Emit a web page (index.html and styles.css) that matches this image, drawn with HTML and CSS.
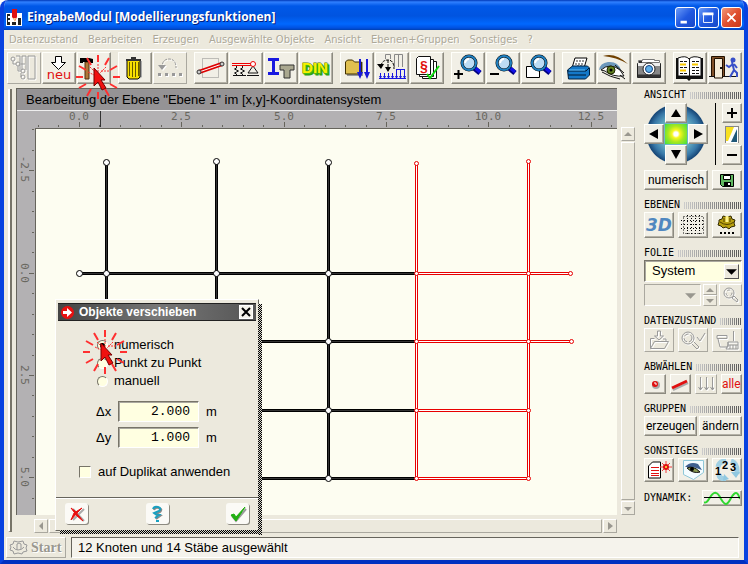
FILE: index.html
```html
<!DOCTYPE html>
<html lang="de">
<head>
<meta charset="utf-8">
<title>EingabeModul</title>
<link rel="stylesheet" href="styles.css">
</head>
<body>
<svg class="defs" aria-hidden="true">
  <defs>
    <symbol id="burst" viewBox="0 0 48 48">
      <g stroke="#ff3030" stroke-width="2" fill="none">
        <path d="M24 2v7M24 39v7M2 24h7M39 24h7M13 5l4 7M35 5l-4 7M5 13l7 4M43 13l-7 4M5 35l7-4M43 35l-7-4M13 43l4-7M35 43l-4-7"/>
        <path stroke-width="1" stroke-dasharray="2 1" d="M24 11v8M14 19l6 3M32 14l-6 6M35 18h-8M16 14l4 4"/>
      </g>
      <path d="M20 15l11 12h-4l5 8-4 2-4-8-4 4z" fill="#f01010" stroke="#700" stroke-width="1"/>
    </symbol>
    <symbol id="lens" viewBox="0 0 32 30">
      <path d="M22 15l6 5" stroke="#000080" stroke-width="5"/>
      <path d="M22 14l6 5" stroke="#1010e8" stroke-width="3"/>
      <circle cx="17" cy="10" r="7" fill="#bcdcf4" stroke="#000" stroke-width="3"/>
      <circle cx="17" cy="10" r="7" fill="none" stroke="#2080c0" stroke-width="2"/>
      <path d="M13 10q1-4 4-4" stroke="#fff" stroke-width="2" fill="none"/>
    </symbol>
  </defs>
</svg>
<div class="window">
  <header class="titlebar">
    <svg class="app-icon" viewBox="0 0 16 17"><path d="M0 4h16v13H0z" fill="#fff"/><path d="M1 5h3v11H1zM12 9h3v7h-3zM6 13h4v3H6z" fill="#222"/><path d="M2 7h2v2H2zM2 11h2v2H2z" fill="#fff"/><path d="M6 0h5v8l-2 4-3-4z" fill="#e01010"/><path d="M7 9h3l-1 4z" fill="#fc8"/></svg>
    <h1>EingabeModul [Modellierungsfunktionen]</h1>
    <div class="caption-buttons">
      <button class="cap" aria-label="Minimieren"><svg viewBox="0 0 21 21"><path d="M5 14h7v3H5z" fill="#fff"/></svg></button>
      <button class="cap" aria-label="Maximieren"><svg viewBox="0 0 21 21"><path d="M5 6h10v10H5z" fill="none" stroke="#fff"/><path d="M4 5h12v3H4z" fill="#fff"/></svg></button>
      <button class="cap cap-close" aria-label="Schließen"><svg viewBox="0 0 21 21"><path d="M6 6l9 9M15 6l-9 9" stroke="#fff" stroke-width="2"/></svg></button>
    </div>
  </header>
  <nav class="menubar">
    <a href="#">Datenzustand</a><a href="#">Bearbeiten</a><a href="#">Erzeugen</a><a href="#">Ausgewählte Objekte</a><a href="#">Ansicht</a><a href="#">Ebenen+Gruppen</a><a href="#">Sonstiges</a><a href="#">?</a>
  </nav>
  <div class="toolbar">
    <div class="group">
      <button class="tool off" aria-label="Struktur"><svg viewBox="0 0 32 30"><path d="M8 3h4v8M14 17V3h4v14M20 3h7v23h-7zM12 11v6M17 11h-4M5 8v3h3M10 13v5h3M13 20v4" fill="none" stroke="#999"/><g fill="none" stroke="#999"><circle cx="5" cy="6" r="2"/><circle cx="10" cy="11" r="2"/><circle cx="15" cy="18" r="2"/><circle cx="15" cy="24" r="2"/></g></svg></button>
      <button class="tool" aria-label="Neu"><svg viewBox="0 0 32 30"><path d="M12.500 3.500h6v6h4l-7 7-7-7h4z" fill="#fff" stroke="#000"/><text class="neu" x="16" y="26">neu</text></svg></button>
      <button class="tool hammer" aria-label="Bearbeiten"><svg viewBox="0 0 32 30"><path d="M7 9h4v17H7z" fill="#b07838" stroke="#503010"/><path d="M2 5h9l4 1v4h-2l-2-1H5v1H2z" fill="#000"/></svg><svg class="burst"><use href="#burst"/></svg></button>
    </div>
    <div class="group">
      <button class="tool" aria-label="Löschen"><svg viewBox="0 0 32 30"><path d="M19 8h4v16l-3 2h-9z" fill="#aaa"/><path d="M8 7h13v17l-2 2h-9l-2-2z" fill="#f8e000" stroke="#000"/><path d="M10.500 9v14M13.500 9v15M16.500 9v15M19.500 9v14" stroke="#665800"/><path d="M7 6h15v2H7zM12 4h5v2h-5z" fill="#333"/></svg></button>
      <button class="tool off" aria-label="Rückgängig"><svg viewBox="0 0 32 30"><path d="M8 15q0-9 7-9t7 9" fill="none" stroke="#999" stroke-width="1" stroke-dasharray="3 1"/><path d="M4 12h8l-4 5zM4 20h3v3H4zM11 20h3v3h-3zM18 20h3v3h-3zM25 20h3v3h-3z" fill="#999"/></svg></button>
    </div>
    <div class="group">
      <button class="tool" aria-label="Stab"><svg viewBox="0 0 32 30"><path d="M7.500 5.500h16v19h-16z" fill="none" stroke="#888" stroke-dasharray="1 1"/><path d="M4 19l23-8" stroke="#d00" stroke-width="4"/><path d="M4 19l23-8" stroke="#fff" stroke-width="1"/><circle cx="4" cy="19" r="2" fill="#ccc" stroke="#333"/><circle cx="27" cy="11" r="2" fill="#ccc" stroke="#333"/></svg></button>
      <button class="tool" aria-label="Lager"><svg viewBox="0 0 32 30"><path d="M2 10.500h20M2 12.500h20" stroke="#e00"/><path d="M6.500 13v2l-2 1 4 2-4 2 2 1v2M12.500 13v2l-2 1 4 2-4 2 2 1v2M3 22.500h13M23 13l-5 7h10zM17 22.500h12" fill="none" stroke="#111"/><circle cx="23" cy="11" r="2.500" fill="#fff" stroke="#e00"/></svg></button>
      <button class="tool" aria-label="Querschnitt"><svg viewBox="0 0 32 30"><path d="M3 6.500h11M3 20.500h11M8.500 7v13" stroke="#1818e0" stroke-width="3"/><path d="M15 12h14v5h-4v8h-6v-8h-4z" fill="#aaa890" stroke="#333"/></svg></button>
      <button class="tool" aria-label="DIN"><svg viewBox="0 0 32 30"><text class="din" x="15" y="20">DIN</text></svg></button>
    </div>
    <div class="group">
      <button class="tool" aria-label="Laden"><svg viewBox="0 0 32 30"><path d="M6 9h16v14H6z" fill="#999"/><path d="M4.500 21V9l2-2h5l2 2h7v12z" fill="#e0c050" stroke="#403000"/><path d="M19 6v16M26 6v16" stroke="#1818d8" stroke-width="2"/><path d="M16 19h6l-3 7zM23 19h6l-3 7z" fill="#1818d8"/></svg></button>
      <button class="tool" aria-label="Lasten"><svg viewBox="0 0 32 30"><path d="M9.500 6V1.500h5V6M18.500 14V1.500h8V14M22.500 2v12" fill="none" stroke="#888"/><path d="M5 13q1-6 7-6t6 9M12 7v10" fill="none" stroke="#000" stroke-dasharray="3 1"/><path d="M1 11h7l-3 5zM9 14h6l-3 5z" fill="#000"/><path d="M3 25.500h27M4.500 20v5M8.500 20v5M12.500 20v5M16.500 20v5M20.500 16v9M24.500 16v9M28.500 16v9M20 16.500h9" stroke="#1818e0"/><path d="M3 23h3l-1.500 3zM7 23h3l-1.500 3zM11 23h3l-1.500 3zM15 23h3l-1.500 3zM19 23h3l-1.500 3zM23 23h3l-1.500 3zM27 23h3l-1.500 3z" fill="#1818e0"/></svg></button>
      <button class="tool" aria-label="Prüfen"><svg viewBox="0 0 32 30"><g fill="#fff" stroke="#111"><path d="M11.500 8.500h14v17h-14z"/><path d="M8.500 6.500h14v17h-14z"/><path d="M5.500 5.500l2-2h12v18h-14z"/></g><text class="para" x="13" y="18">§</text><path d="M16 21l3 4 9-12" fill="none" stroke="#10d810" stroke-width="2"/></svg></button>
    </div>
    <div class="group">
      <button class="tool" aria-label="Vergrößern"><svg viewBox="0 0 32 30"><use href="#lens"/><path d="M2 21h9M6.500 17v9" stroke="#000" stroke-width="2"/></svg></button>
      <button class="tool" aria-label="Verkleinern"><svg viewBox="0 0 32 30"><use href="#lens"/><path d="M3 21h9" stroke="#000" stroke-width="2"/></svg></button>
      <button class="tool" aria-label="Ausschnitt"><svg viewBox="0 0 32 30"><path d="M4.500 13.500h13v11h-13z" fill="#fff" stroke="#000"/><use href="#lens"/></svg></button>
    </div>
    <div class="group">
      <button class="tool" aria-label="Drucken"><svg viewBox="0 0 32 30"><path d="M9 15l3-10h12l-3 10z" fill="#fff" stroke="#000"/><path d="M13 8h8M12 11h8M14 13h5" stroke="#333" stroke-dasharray="2 1"/><path d="M4.500 17l5-4h15l2 2v7l-4 4h-17z" fill="#1478c8" stroke="#002040"/><path d="M5 18h18l3-3M5 22h18" fill="none" stroke="#001830"/><path d="M6 17h16" stroke="#60c0ff"/></svg></button>
      <button class="tool" aria-label="Ansehen"><svg viewBox="0 0 32 30"><path d="M5 3Q17-1 30 11 18 4 5 3z" fill="#704000"/><path d="M1 17q1-7 9-8 10-1 13 8l-12-4z" fill="#6c98bc"/><path d="M3 17q9-8 19 0l4 6q-12 1-19-5z" fill="#fff" stroke="#111"/><circle cx="13" cy="17" r="4" fill="#608020" stroke="#202800"/><circle cx="13" cy="17" r="1.500"/><path d="M4 19q8 5 18 7M17 12l9 8M22 22l5 4" fill="none" stroke="#111"/></svg></button>
      <button class="tool" aria-label="Foto"><svg viewBox="0 0 32 30"><path d="M5.500 9.500v-2h4v-1h12v1h5v2z" fill="#fff" stroke="#777"/><path d="M4.500 10.500h23v14h-23z" fill="#888" stroke="#222"/><path d="M5 10h22v3H5z" fill="#eee"/><path d="M5 23h22" stroke="#333" stroke-width="3"/><circle cx="16" cy="16" r="6" fill="#fff" stroke="#222"/><circle cx="16" cy="16" r="3.500" fill="#60b0e8" stroke="#104080"/><path d="M6 8h3v2H6z" fill="#333"/></svg></button>
    </div>
    <div class="group">
      <button class="tool" aria-label="Handbuch"><svg viewBox="0 0 32 30"><path d="M2 5h27v21H17l-2 2-2-2H2z" fill="#111"/><path d="M4 5q8-3 11 1 4-4 12-1v18H4z" fill="#fff" stroke="#111"/><path d="M15.500 6v19" stroke="#111"/><path d="M6 8.500h7M6 14.500h7M6 20.500h7M18 8.500h7M18 14.500h7M18 17.500h7M18 20.500h7" stroke="#111" stroke-dasharray="3 1"/><path d="M6 11.500h6M18 11.500h6M6 17.500h6" stroke="#f8c800" stroke-width="2"/></svg></button>
      <button class="tool" aria-label="Beenden"><svg viewBox="0 0 32 30"><path d="M2.500 24V3.500h13V24" fill="#805028" stroke="#201000"/><path d="M5.500 5.500h8V25h-8z" fill="#f4ecd8" stroke="#201000"/><path d="M11 14h2v2h-2zM0 23h6v1H0zM14 23h15v1H14z" fill="#111"/><circle cx="24" cy="7" r="2.500" fill="#3850c8"/><path d="M23 9l2 8-4 7M25 17l3 3v4M24 11l-4 3-3-2M25 11l3 4" fill="none" stroke="#3850c8" stroke-width="2"/></svg></button>
    </div>
  </div>

  <main class="workspace">
    <div class="rail"></div>
    <section class="editor">
      <div class="view">
        <h2>Bearbeitung der Ebene "Ebene 1" im [x,y]-Koordinatensystem</h2>
        <svg class="ruler-x"><g transform="translate(-17 -111)"><path class="tick" d="M79.500 122v5M181.500 122v5M284.500 122v5M386.500 122v5M488.500 122v5M591.500 122v5M38.500 125v2M58.500 125v2M99.500 125v2M120.500 125v2M140.500 125v2M161.500 125v2M202.500 125v2M222.500 125v2M243.500 125v2M263.500 125v2M304.500 125v2M325.500 125v2M345.500 125v2M366.500 125v2M407.500 125v2M427.500 125v2M448.500 125v2M468.500 125v2M509.500 125v2M529.500 125v2M550.500 125v2M571.500 125v2M611.500 125v2"/><path d="M100.500 111v16" stroke="#333"/><g class="scale"><text x="79" y="120">0.0</text><text x="181" y="120">2.5</text><text x="284" y="120">5.0</text><text x="386" y="120">7.5</text><text x="488" y="120">10.0</text><text x="591" y="120">12.5</text></g></g></svg>
        <svg class="ruler-y"><g transform="translate(-17 -128)"><path class="tick" d="M29 170.500h5M29 273.500h5M29 375.500h5M29 477.500h5M32 129.500h2M32 150.500h2M32 191.500h2M32 211.500h2M32 232.500h2M32 252.500h2M32 293.500h2M32 314.500h2M32 334.500h2M32 355.500h2M32 395.500h2M32 416.500h2M32 436.500h2M32 457.500h2M32 498.500h2"/><g class="scale"><text transform="translate(21 169) rotate(90)">-2.5</text><text transform="translate(21 273) rotate(90)">0.0</text><text transform="translate(21 375) rotate(90)">2.5</text><text transform="translate(21 477) rotate(90)">5.0</text></g></g></svg>
        <svg class="model"><g transform="translate(-36 -129)">
          <path class="bar" d="M106.500 162v317M216.500 161v318M328.500 162v317M79 273.500h338M79 341.500h338M79 410.500h338M79 478.500h338"/>
          <path class="bar-core" d="M106.500 162v317M216.500 161v318M328.500 162v317M79 273.500h338M79 341.500h338M79 410.500h338M79 478.500h338"/>
          <path class="sel" d="M416.500 163v316M528.500 161v318M416 273.500h154M416 341.500h155M416 410.500h112M416 478.500h112"/>
          <path class="sel-core" d="M416.500 163v316M528.500 161v318M416 273.500h154M416 341.500h155M416 410.500h112M416 478.500h112"/>
          <g class="node"><circle cx="106.500" cy="162.500" r="3"/><circle cx="216.500" cy="161.500" r="3"/><circle cx="328.500" cy="162.500" r="3"/><circle cx="79.500" cy="273.500" r="3"/><circle cx="106.500" cy="273.500" r="3"/><circle cx="216.500" cy="273.500" r="3"/><circle cx="328.500" cy="273.500" r="3"/><circle cx="328.500" cy="341.500" r="3"/><circle cx="328.500" cy="410.500" r="3"/><circle cx="328.500" cy="478.500" r="3"/></g>
          <g class="node-sel"><circle cx="416.500" cy="163.500" r="2"/><circle cx="528.500" cy="161.500" r="2"/><circle cx="416.500" cy="273.500" r="2"/><circle cx="528.500" cy="273.500" r="2"/><circle cx="570.500" cy="273.500" r="2"/><circle cx="416.500" cy="341.500" r="2"/><circle cx="528.500" cy="341.500" r="2"/><circle cx="571.500" cy="341.500" r="2"/><circle cx="416.500" cy="410.500" r="2"/><circle cx="528.500" cy="410.500" r="2"/><circle cx="416.500" cy="478.500" r="2"/><circle cx="528.500" cy="478.500" r="2"/></g>
        </g></svg>
      </div>
      <div class="scroll-y"><button class="arrow" aria-label="Nach oben"><svg viewBox="0 0 12 12"><path d="M2 8l4-4 4 4z"/></svg></button><div class="track"></div><button class="arrow" aria-label="Nach unten"><svg viewBox="0 0 12 12"><path d="M2 5h8L6 9z"/></svg></button></div>
      <div class="scroll-x"><button class="arrow" aria-label="Nach links"><svg viewBox="0 0 12 12"><path d="M8 2v8L4 6z"/></svg></button><div class="track"></div><button class="arrow" aria-label="Nach rechts"><svg viewBox="0 0 12 12"><path d="M4 2v8l5-4z"/></svg></button></div>
    </section>

    <aside class="panel">
      <section>
        <h3>ANSICHT</h3>
        <div class="view-controls">
          <div class="compass">
            <button class="btn up" aria-label="Oben"><svg viewBox="0 0 18 18"><path d="M4 13l5-8 5 8z"/></svg></button>
            <button class="btn left" aria-label="Links"><svg viewBox="0 0 18 18"><path d="M13 4v10L4 9z"/></svg></button>
            <button class="hub" aria-label="Mitte"></button>
            <button class="btn right" aria-label="Rechts"><svg viewBox="0 0 18 18"><path d="M5 4v10l9-5z"/></svg></button>
            <button class="btn down" aria-label="Unten"><svg viewBox="0 0 18 18"><path d="M4 4h10l-5 9z"/></svg></button>
          </div>
          <div class="rule"></div>
          <div class="zoom-col">
            <button class="btn" aria-label="Größer"><svg viewBox="0 0 18 18"><path d="M4 9h10M9 4v10" stroke="#000" stroke-width="2"/></svg></button>
            <svg class="contrast" viewBox="0 0 14 17"><path d="M0 0h14v17H0z" fill="#888"/><path d="M1 1h12v16H1z" fill="#fff"/><path d="M1 1h8L3 15H1z" fill="#f8e020"/><path d="M12 3v13H6z" fill="#205878"/></svg>
            <button class="btn" aria-label="Kleiner"><svg viewBox="0 0 18 18"><path d="M4 9h10" stroke="#000" stroke-width="2"/></svg></button>
          </div>
        </div>
        <div class="row h20 gap-top"><button class="btn grow">numerisch</button><button class="btn w30" aria-label="Speichern"><svg width="16" height="16" viewBox="0 0 16 16"><path d="M1.500 2.500h13v12h-11l-2-2z" fill="#60b860" stroke="#000"/><path d="M4.500 3.500h7v4h-7z" fill="#fff" stroke="#000"/><path d="M5 10h7v4H5z" fill="#000"/><path d="M9 11h2v2H9z" fill="#fff"/></svg></button></div>
      </section>
      <section>
        <h3>EBENEN</h3>
        <div class="row h26"><button class="btn grow threed">3D</button><button class="btn grow" aria-label="Raster"><svg width="26" height="22" viewBox="0 0 26 22"><path d="M3.500 2.500h20v17h-20zM7.500 1v20M11.500 1v20M15.500 1v20M19.500 1v20M1 6.500h24M1 10.500h24M1 14.500h24" fill="none" stroke="#000" stroke-dasharray="1 2"/></svg></button><button class="btn grow" aria-label="Ebene einstellen"><svg width="22" height="22" viewBox="0 0 22 22"><path d="M3 6l3-1 1-3 4 1 4-1 1 3 3 1-1 3 1 3-4 1-2 2-3-2-3 1-2-2-3-1 1-3z" fill="#b8a010" stroke="#302800"/><path d="M11 2v6" stroke="#fff48c" stroke-width="3"/><path d="M4 8q7 5 14 0M8 4v4M14 4v4" fill="none" stroke="#504000"/><path d="M4 18h2v2H4zM8 18h2v2H8zM12 18h2v2h-2zM16 18h2v2h-2z"/></svg></button></div>
      </section>
      <section>
        <h3>FOLIE</h3>
        <div class="combo"><select aria-label="Folie"><option>System</option></select><span class="drop"><svg viewBox="0 0 12 12"><path d="M1 4h10L6 9z"/></svg></span></div>
        <div class="row h22 tight">
          <div class="combo combo-off"><select aria-label="Element" disabled><option></option></select><span class="drop"><svg viewBox="0 0 12 12"><path d="M1 4h10L6 9z"/></svg></span></div>
          <div class="spin"><button class="arrow" aria-label="Weiter"><svg viewBox="0 0 10 8"><path d="M1 6l4-4 4 4z"/></svg></button><button class="arrow" aria-label="Zurück"><svg viewBox="0 0 10 8"><path d="M1 2h8L5 6z"/></svg></button></div>
          <button class="btn off w23" aria-label="Suchen"><svg width="18" height="18" viewBox="0 0 18 18" fill="none" stroke="#999"><circle cx="7" cy="7" r="5"/><circle cx="7" cy="7" r="3" stroke-dasharray="3 3"/><path d="M10 12l5 4 1-2-4-4z"/></svg></button>
        </div>
      </section>
      <section>
        <h3>DATENZUSTAND</h3>
        <div class="row h24"><button class="btn grow off" aria-label="Öffnen"><svg width="22" height="20" viewBox="0 0 22 20" fill="none" stroke="#999"><path d="M9.500 1h3v5h3l-4.500 4-4.500-4h3zM2.500 18.500v-10h4M15 9h3v3M2.500 18.500l4-7h14l-4 7z"/></svg></button><button class="btn grow off" aria-label="Kontrollieren"><svg width="26" height="20" viewBox="0 0 26 20" fill="none" stroke="#999"><circle cx="8" cy="8" r="6"/><circle cx="8" cy="8" r="4" stroke-dasharray="5 2"/><path d="M12 14l5 5 2-2-5-5M17 7l3 4 5-8" /></svg></button><button class="btn grow off" aria-label="Aufräumen"><svg width="24" height="20" viewBox="0 0 24 20" fill="none" stroke="#999"><path d="M2 5.500h10v3H2zM3 9l2 8h8v-5M18.500 1v10M13 12h10v3H13zM13 15l-2 4h12v-4M15 15v4M18 15v4M21 15v4"/></svg></button></div>
      </section>
      <section>
        <h3>ABWÄHLEN</h3>
        <div class="row h20"><button class="btn grow" aria-label="Knoten"><svg width="16" height="16" viewBox="0 0 16 16"><circle cx="9" cy="9" r="4" fill="#aaa"/><circle cx="8" cy="8" r="3" fill="#e01010"/><path d="M7 7h2v2" stroke="#fff" fill="none"/></svg></button><button class="btn grow" aria-label="Stäbe"><svg width="18" height="16" viewBox="0 0 18 16"><path d="M2 14l15-7" stroke="#aaa" stroke-width="2"/><path d="M1 12l15-7" stroke="#e01010" stroke-width="3"/></svg></button><button class="btn grow off" aria-label="Lasten"><svg width="16" height="16" viewBox="0 0 16 16" fill="none" stroke="#999"><path d="M2.500 1v13M8.500 1v13M14.500 1v13M.500 11l2 3 2-3M6.500 11l2 3 2-3M12.500 11l2 3 2-3"/></svg></button><button class="btn grow alle">alle</button></div>
      </section>
      <section>
        <h3>GRUPPEN</h3>
        <div class="row h20 close"><button class="btn wide">erzeugen</button><button class="btn grow">ändern</button></div>
      </section>
      <section>
        <h3>SONSTIGES</h3>
        <div class="row h24"><button class="btn grow" aria-label="Protokoll"><svg width="26" height="20" viewBox="0 0 26 20"><path d="M2.500 6l4-4h8v16h-12z" fill="#fff" stroke="#000"/><path d="M5 7.500h8M5 10.500h8M5 13.500h8M5 15.500h8" stroke="#e01010"/><path d="M20 1v12M14 7h12M16 3l8 8M24 3l-8 8" stroke="#f04040"/><circle cx="20" cy="7" r="3" fill="#e01010"/><circle cx="20" cy="7" r="1" fill="#fe4"/></svg></button><button class="btn grow" aria-label="Sichtbarkeit"><svg width="26" height="22" viewBox="0 0 26 22"><path d="M3.500 1.500h20v12l-10 7-10-5z" fill="#f4fcff" stroke="#90c8d8"/><path d="M5 8q5-6 13-3l4 6-9-3z" fill="#406090"/><path d="M7 9q6-3 13 4-7 2-13-4z" fill="#8a9a50" stroke="#111"/><circle cx="12" cy="10" r="2"/></svg></button><button class="btn grow" aria-label="Nummerierung"><svg width="26" height="22" viewBox="0 0 26 22"><path d="M5 15q0 5 7 5M4 8q1-6 8-6M17 2q7 2 6 13" fill="none" stroke="#a0d0e4" stroke-width="5"/><path d="M10 15l5 5-6 2zM17 13h9l-4 6z" fill="#90c8e0"/><g class="digits"><text x="1" y="16">1</text><text x="8" y="10">2</text><text x="16" y="12">3</text></g></svg></button></div>
      </section>
      <section class="dynamic"><span id="dyn">DYNAMIK:</span><button class="btn" aria-labelledby="dyn"><svg width="36" height="14" viewBox="0 0 36 14"><path d="M0 11q2 2 5-3 4-7 7-6 2 0 5 6 3 5 5 5 2 0 5-6 3-5 5-5 2 0 4 6" fill="none" stroke="#30d830" stroke-width="2"/><path d="M0 6.500h36" stroke="#000"/></svg></button></section>
    </aside>

    <form class="dialog" onsubmit="return false">
      <header><svg width="13" height="13" viewBox="0 0 13 13"><circle cx="6.500" cy="6.500" r="6.500" fill="#e81010"/><path d="M2 5h4V2l5 4.500L6 11V8H2z" fill="#fff"/></svg><h2>Objekte verschieben</h2><button aria-label="Schließen"><svg width="10" height="10" viewBox="0 0 10 10"><path d="M1 1l8 8M9 1l-8 8" stroke="#000" stroke-width="2"/></svg></button></header>
      <div class="fields">
        <label class="choice"><input type="radio" name="modus" checked>numerisch</label>
        <label class="choice"><input type="radio" name="modus">Punkt zu Punkt</label>
        <label class="choice"><input type="radio" name="modus">manuell</label>
        <div class="value first"><label for="dx">Δx</label><input id="dx" type="text" value="2.000"><span>m</span></div>
        <div class="value"><label for="dy">Δy</label><input id="dy" type="text" value="1.000"><span>m</span></div>
        <label class="check"><input type="checkbox">auf Duplikat anwenden</label>
      </div>
      <footer>
        <button aria-label="Abbrechen"><svg width="18" height="18" viewBox="0 0 18 18"><path d="M5 4l11 12M16 4L5 15" stroke="#aaa" stroke-width="2"/><path d="M3 3l4 3 8 10-6-5zM14 3l-5 5-6 7 3-7z" fill="#e81010" stroke="#e81010"/></svg></button>
        <button aria-label="Hilfe"><svg width="18" height="18" viewBox="0 0 18 18"><path d="M6 5q1-3 5-2 4 1 1 4l-4 2q1 2 4 2l-4 3" fill="none" stroke="#888" stroke-width="2"/><path d="M5 4q1-3 5-2 4 1 1 4l-5 2q2 2 5 2l-4 3" fill="none" stroke="#18a0c0" stroke-width="2"/><path d="M8 15h3v2H8z" fill="#18a0c0"/></svg></button>
        <button aria-label="Übernehmen"><svg width="18" height="18" viewBox="0 0 18 18"><path d="M3 11l4 5L17 4" fill="none" stroke="#999" stroke-width="2"/><path d="M2 10l3-1 2 3 9-10-9 14z" fill="#20b010" stroke="#20b010"/></svg></button>
      </footer>
      <svg class="burst"><use href="#burst"/></svg>
    </form>
  </main>

  <footer class="statusbar">
    <button class="start"><svg width="19" height="15" viewBox="0 0 19 15" fill="none" stroke="#999"><path d="M1 5l3-1 1-3 4 1 5-1 1 3 3 1-1 3 1 3-4 1-1 2-4-1-4 1-1-3-3-1 1-3z"/><path d="M8 10V4q2-2 4 0v5M4 7q2 3 5 3 4 0 6-3" /></svg>Start</button>
    <output class="status">12 Knoten und 14 Stäbe ausgewählt</output>
  </footer>
</div>
</body>
</html>
```
FILE: styles.css
```css
:root {
  --face: #ece9dd;
  --light: #fffffa;
  --dark: #8c8a80;
  --field: #ffffe1;
  --ui: "Liberation Sans", Arial, sans-serif;
  --mono: "DejaVu Sans Mono", monospace;
}
* { box-sizing: border-box; }
body { margin: 0; background: #fff; font: 13px/16px var(--ui); color: #000; }
h1, h2, h3 { margin: 0; font-size: inherit; }
button { font: inherit; color: inherit; padding: 0; margin: 0; }
svg { display: block; }
.defs { position: absolute; width: 0; height: 0; }

.window {
  min-height: 100vh;
  display: flex;
  flex-direction: column;
  background: var(--face);
  border: 4px solid #0842e0;
  border-top: 0;
  border-bottom-color: #0030c0;
  border-radius: 8px 8px 0 0;
  overflow: hidden;
}
.titlebar {
  height: 30px;
  margin: 0 -4px;
  padding: 4px 6px 0;
  display: flex;
  align-items: center;
  gap: 5px;
  background: linear-gradient(#0038b8 0, #3080ff 2px, #0058e8 6px, #0054e0 16px, #0068ff 24px, #0050e0 28px, #0040b0 30px);
}
.app-icon { width: 16px; height: 17px; }
.titlebar h1 { flex: 1; font: bold 12px/18px "Open Sans", sans-serif; color: #fff; text-shadow: 1px 1px 0 #002080; white-space: nowrap; }
.caption-buttons { display: flex; gap: 2px; }
.cap { width: 21px; height: 21px; border: 1px solid #fff; border-radius: 3px; background: linear-gradient(135deg, #6c9cf8, #2058e0 50%, #1848c8); }
.cap svg { width: 19px; height: 19px; }
.cap-close { background: linear-gradient(135deg, #f09878, #e05030 50%, #c83818); }

.menubar { height: 20px; display: flex; align-items: center; gap: 10px; padding-left: 5px; border-bottom: 1px solid #fff; }
.menubar a { font: 11px/16px "DejaVu Sans Condensed", "DejaVu Sans", sans-serif; color: #aca899; text-decoration: none; text-shadow: 1px 1px 0 #fff; white-space: nowrap; }

.toolbar { height: 38px; display: flex; gap: 7px; padding: 2px 3px; }
.group { display: flex; gap: 1px; }
.tool, .btn {
  background: #f1efe6;
  border: 1px solid;
  border-color: var(--light) var(--dark) var(--dark) var(--light);
  box-shadow: inset -1px -1px 0 #b4b1a6;
  display: flex;
  align-items: center;
  justify-content: center;
}
.tool { width: 34px; height: 32px; }
.tool svg { width: 32px; height: 30px; flex: none; }
.tool.off, .btn.off { background: var(--face); border-color: #fff #aaa89f #aaa89f #fff; box-shadow: none; }
.off svg { filter: drop-shadow(1px 1px 0 #fff); }
.neu { font: 13px "DejaVu Sans", sans-serif; fill: #e01010; text-anchor: middle; }
.din { font: bold 15px var(--ui); fill: #f8f000; stroke: #608000; stroke-width: 1px; paint-order: stroke; text-anchor: middle; text-shadow: 1px 1px 0 #40c010, 2px 2px 0 #30a010; }
.para { font: bold 14px var(--ui); fill: #e01010; text-anchor: middle; }
.hammer { position: relative; }
.burst, .tool .burst { position: absolute; width: 48px; height: 48px; pointer-events: none; z-index: 3; }
.tool .burst { left: -4px; top: 0; }

.workspace { flex: 1; display: flex; position: relative; min-height: 449px; }
.rail { width: 4px; margin: 1px 0 5px 4px; border-left: 2px solid #fff; border-right: 2px solid #777468; border-bottom: 1px solid #777468; }
.editor { flex: 1; min-width: 0; margin-left: 4px; display: grid; grid-template-columns: minmax(0, 1fr) 14px; grid-template-rows: minmax(0, 1fr) 14px; gap: 4px; padding-bottom: 4px; }
.view { display: grid; grid-template-columns: 18px minmax(0, 1fr); grid-template-rows: 22px 17px minmax(0, 1fr); border-top: 1px solid #66645c; border-left: 1px solid #66645c; }
.view h2 { grid-column: 1 / 3; background: #959395; border-bottom: 1px solid #eee; padding-left: 9px; font-weight: normal; line-height: 22px; white-space: nowrap; }
.view svg { width: 100%; height: 100%; overflow: hidden; }
.view .ruler-x { grid-column: 1 / 3; background: #b3b1b3; overflow: visible; }
.ruler-y { background: #b3b1b3; }
.model { background: #fdfdf1; border: 1px solid #66645c; border-width: 1px 0 0 1px; }
.tick { stroke: #66645c; fill: none; }
.scale { font: 11px var(--mono); fill: #69675f; text-anchor: middle; }
.bar { stroke: #000; stroke-width: 3; fill: none; }
.bar-core { stroke: #333; stroke-width: 1; fill: none; }
.sel { stroke: #e80000; stroke-width: 3; fill: none; }
.sel-core { stroke: #fff; stroke-width: 1; fill: none; }
.node { fill: #fff; stroke: #000; }
.node-sel { fill: #fff; stroke: #e80000; }
.scroll-y { display: flex; flex-direction: column; gap: 1px; padding-top: 39px; }
.scroll-x { display: flex; gap: 1px; padding-left: 18px; }
.track { flex: 1; border: 1px solid; border-color: #fff #aaa89f #aaa89f #fff; }
.arrow { width: 14px; height: 14px; background: var(--face); border: 1px solid; border-color: #fff #aaa89f #aaa89f #fff; fill: #99978f; display: flex; align-items: center; justify-content: center; }
.arrow svg { width: 12px; height: 12px; }

.panel { width: 98px; margin: 0 2px 0 9px; display: flex; flex-direction: column; gap: 8px; }
.panel h3, .dynamic span { font: 10px/14px var(--mono); }
.panel h3 { display: flex; align-items: center; gap: 4px; }
.panel h3::after { content: ""; flex: 1; height: 7px; background: repeating-linear-gradient(90deg, transparent 0 1px, var(--face) 1px 2px), linear-gradient(90deg, #ccc, #555); }
.btn { white-space: nowrap; fill: #000; font: 12px/16px Roboto, var(--ui); }
.row { display: flex; gap: 4px; }
.grow { flex: 1; min-width: 0; }
.w30 { width: 30px; }
.w23 { width: 23px; }
.wide { width: 53px; }
.h20 { height: 20px; }
.h22 { height: 22px; }
.h24 { height: 24px; }
.h26 { height: 26px; }
.close { gap: 2px; }
.tight { gap: 2px; margin-top: 2px; }
.gap-top { margin-top: 5px; }
.view-controls { display: flex; justify-content: space-between; padding-top: 1px; }
.compass { display: grid; grid-template-columns: 20px 22px 20px; grid-template-rows: 20px 20px 20px; gap: 1px; background: radial-gradient(circle, #70b8c8 14px, #3878a8 24px, #184878 29px, transparent 30px); }
.compass svg, .zoom-col .btn svg { width: 18px; height: 18px; }
.up { grid-area: 1 / 2; }
.left { grid-area: 2 / 1; }
.hub { grid-area: 2 / 2; border: 0; background: radial-gradient(circle, #fff 2px, #f8f820 4px, #a8e820 8px, #40e040 15px); }
.right { grid-area: 2 / 3; }
.down { grid-area: 3 / 2; }
.rule { width: 1px; background: #000; }
.zoom-col { width: 20px; display: flex; flex-direction: column; justify-content: space-between; align-items: center; }
.zoom-col .btn { width: 20px; height: 20px; }
.contrast { width: 14px; height: 17px; }
.threed { font: italic bold 17px/20px "DejaVu Sans", sans-serif; color: #5088c0; }
.combo { position: relative; height: 22px; border: 1px solid; border-color: #777468 #fff #fff #777468; box-shadow: inset 1px 1px 0 #aaa89f; background: var(--field); }
.combo select { width: 100%; height: 100%; appearance: none; border: 0; padding: 0 0 0 7px; background: transparent; font: inherit; color: inherit; }
.drop { position: absolute; right: 2px; top: 3px; width: 15px; height: 15px; background: var(--face); border: 1px solid; border-color: #fff #555 #555 #fff; pointer-events: none; }
.drop svg { width: 13px; height: 13px; }
.combo-off { flex: 1; background: var(--face); border-color: #aaa89f #fff #fff #aaa89f; box-shadow: none; }
.combo-off .drop { border-color: transparent; fill: #99978f; }
.spin { width: 14px; display: flex; flex-direction: column; }
.spin .arrow { height: 11px; }
.spin .arrow svg { width: 10px; height: 8px; }
.alle { color: #e01010; }
.digits { font: bold 11px var(--ui); }
.dynamic { display: flex; justify-content: space-between; align-items: center; }
.dynamic .btn { width: 40px; height: 16px; }

.dialog {
  position: absolute;
  left: 51px;
  top: 211px;
  width: 204px;
  background: var(--face);
  border: 1px solid;
  border-color: #fff #66645c #66645c #fff;
  padding: 3px 2px 0;
  z-index: 2;
}
.dialog::before, .dialog::after { content: ""; position: absolute; background: repeating-conic-gradient(#000 0 25%, #d8d6cc 0 50%) 0 0 / 2px 2px; }
.dialog::before { left: 100%; top: 4px; bottom: -5px; width: 4px; }
.dialog::after { left: 4px; right: 0; top: 100%; height: 4px; }
.dialog header { height: 18px; display: flex; align-items: center; gap: 5px; padding: 0 3px; background: linear-gradient(90deg, #444 0%, #777 50%, #555 100%); border-top: 1px solid #222; border-bottom: 1px solid #222; }
.dialog header h2 { flex: 1; font: bold 12px/16px "Liberation Sans", sans-serif; color: #fff; }
.dialog header button { width: 14px; height: 14px; background: #f4f2ea; border: 1px solid #fff; display: flex; align-items: center; justify-content: center; }
.fields { padding: 15px 20px 16px; }
.choice, .check { display: flex; align-items: center; height: 18px; }
.choice { padding-left: 19px; gap: 6px; }
.choice input { appearance: none; width: 11px; height: 11px; margin: 0; border-radius: 50%; background: var(--field); border: 1px solid; border-color: #777468 #fff #fff #777468; }
.choice input:checked { background: radial-gradient(circle, #000 2px, var(--field) 3px); }
.value { display: flex; align-items: center; margin-top: 5px; padding-left: 18px; }
.value.first { margin-top: 11px; }
.value label { width: 22px; }
.value input { width: 81px; height: 21px; padding: 0 8px; text-align: right; font: 13px/17px "Liberation Mono", monospace; background: var(--field); border: 1px solid; border-color: #777468 #fff #fff #777468; box-shadow: inset 1px 1px 0 #aaa89f; }
.value span { margin-left: 7px; }
.check { margin-top: 15px; gap: 7px; white-space: nowrap; }
.check input { appearance: none; width: 12px; height: 12px; margin: 0 0 0 1px; background: var(--field); border: 1px solid; border-color: #777468 #fff #fff #777468; }
.dialog footer { height: 33px; margin: 0 -2px; padding: 5px 9px; display: flex; justify-content: space-between; border-top: 1px solid #66645c; box-shadow: inset 0 1px 0 #fff; }
.dialog footer button { width: 23px; height: 21px; background: #fbfaf6; border: 0; border-radius: 3px; box-shadow: 1px 1px 0 #8c8a80; display: flex; align-items: center; justify-content: center; }
.dialog .burst { left: 25px; top: 28px; }

.statusbar { height: 23px; display: flex; gap: 5px; padding: 0 5px 2px 2px; align-items: stretch; }
.start { width: 60px; display: flex; align-items: center; gap: 3px; padding-left: 2px; background: var(--face); border: 1px solid; border-color: #fff #aaa89f #aaa89f #fff; font: bold 14px/18px "Liberation Serif", serif; color: #99978f; text-shadow: 1px 1px 0 #fff; }
.status { flex: 1; padding-left: 6px; line-height: 19px; background: #f5f3ec; border: 1px solid; border-color: #66645c #fff #fff #66645c; }
```
